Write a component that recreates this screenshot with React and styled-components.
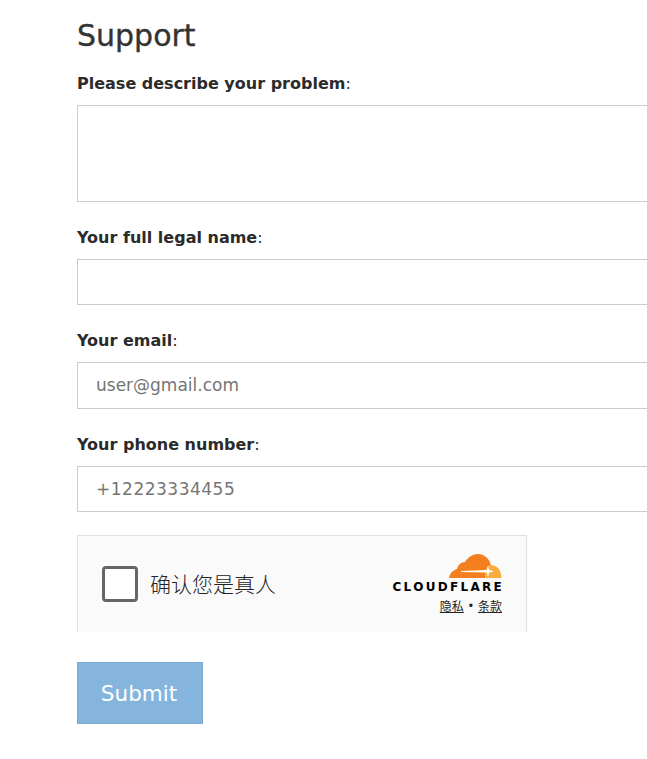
import React from 'react';
import styled, { createGlobalStyle } from 'styled-components';

const GlobalStyle = createGlobalStyle`
  html, body {
    margin: 0;
    height: 100%;
    overflow: hidden;
    background: #fff;
  }
  body {
    font-family: "DejaVu Sans", "Noto Sans", sans-serif;
    color: #2b2b2b;
  }
`;

const Page = styled.div`
  box-sizing: border-box;
  width: 100%;
  overflow: hidden;
  padding: 0 0 0 77px;
`;

const Title = styled.h1`
  margin: 0;
  padding-top: 17px;
  font-size: 30px;
  line-height: 38px;
  font-weight: 400;
  color: #333;
  -webkit-text-stroke: 0.35px #333;
`;

const Form = styled.form`
  display: flex;
  flex-direction: column;
  padding-top: 16px;
`;

const Field = styled.div`
  display: flex;
  flex-direction: column;
  margin-bottom: 23px;
`;

const Label = styled.label`
  display: block;
  padding-top: 1px;
  font-size: 16px;
  line-height: 24px;
  font-weight: 700;
  color: #2b2b2b;
  margin-bottom: 9px;
`;

const Colon = styled.span`
  font-weight: 400;
`;

const Input = styled.input`
  box-sizing: border-box;
  width: 640px;
  height: ${p => p.$height || 46}px;
  padding: 0 18px ${p => (p.$height ? 2 : 0)}px;
  border: 1px solid #ccc;
  border-radius: 0;
  outline: none;
  font-family: inherit;
  font-size: 17px;
  letter-spacing: ${p => p.$spacing || 0}px;
  color: #333;
  background: #fff;
  &::placeholder {
    color: #757575;
    opacity: 1;
  }
`;

const TextArea = styled.textarea`
  display: block;
  box-sizing: border-box;
  width: 640px;
  height: 97px;
  border: 1px solid #ccc;
  outline: none;
  resize: none;
  background: #fff;
`;

const Widget = styled.div`
  box-sizing: border-box;
  display: flex;
  align-items: flex-start;
  justify-content: space-between;
  width: 450px;
  height: 97px;
  padding: 18px 24px 0 24px;
  background: #fafafa;
  border: 1px solid #e0e0e0;
  border-bottom: none;
`;

const Check = styled.div`
  display: flex;
  align-items: center;
  gap: 12px;
  padding-top: 12px;
`;

const Box = styled.span`
  box-sizing: border-box;
  display: block;
  width: 36px;
  height: 36px;
  border: 3px solid #666;
  border-radius: 4px;
  background: #fff;
`;

const CheckText = styled.span`
  padding-bottom: 2px;
  font-family: "Noto Sans CJK SC", sans-serif;
  font-size: 21px;
  line-height: 30px;
  font-weight: 300;
  color: #232323;
`;

const Brand = styled.div`
  display: flex;
  flex-direction: column;
  align-items: flex-end;
`;

const Cloud = styled.svg`
  display: block;
  width: 53px;
  height: 25px;
`;

const Wordmark = styled.span`
  display: block;
  margin-top: 1px;
  font-family: "DejaVu Sans", sans-serif;
  font-size: 12px;
  line-height: 15px;
  font-weight: 700;
  letter-spacing: 2.3px;
  margin-right: -2px;
  color: #000;
`;

const Links = styled.div`
  display: flex;
  align-items: center;
  gap: 5px;
  margin-top: 3px;
  font-family: "Noto Sans CJK SC", sans-serif;
  font-size: 12px;
  line-height: 16px;
  color: #232323;
`;

const FooterLink = styled.a`
  color: inherit;
  text-decoration: underline;
`;

const Dot = styled.span`
  font-family: "Liberation Sans", sans-serif;
`;

const Submit = styled.button`
  box-sizing: border-box;
  align-self: flex-start;
  width: 126px;
  height: 62px;
  margin-top: 30px;
  padding: 0 2px 0 0;
  border: 1px solid #7ba9d2;
  border-radius: 0;
  background: #85b4dd;
  color: #fff;
  font-family: inherit;
  font-size: 21.5px;
`;

const CloudflareCloud = () => (
  <Cloud viewBox="0 0 53 25" aria-hidden="true">
    <path
      fill="#f38020"
      d="M0 24C1 19 4 16 8 15 9 11 12 8 16 8 19 3 24 0 29 0 35 0 40 4 42 11 39 11 37 14 36 24Z"
    />
    <path fill="#faad3f" d="M42 11C48 11 52 16 52.500 24H36C36.500 16 38 11 42 11Z" />
    <path
      fill="#fff"
      d="M39 12 40.200 16 45 17.200 40.200 18.400 39 23 37.800 18.400 12 18.100V17L37.800 16Z"
    />
  </Cloud>
);

export default function App() {
  return (
    <Page>
      <GlobalStyle />
      <Title>Support</Title>
      <Form>
        <Field>
          <Label>Please describe your problem<Colon>:</Colon></Label>
          <TextArea />
        </Field>
        <Field>
          <Label>Your full legal name<Colon>:</Colon></Label>
          <Input />
        </Field>
        <Field>
          <Label>Your email<Colon>:</Colon></Label>
          <Input $height={47} placeholder="user@gmail.com" />
        </Field>
        <Field>
          <Label>Your phone number<Colon>:</Colon></Label>
          <Input $spacing={0.5} placeholder="+12223334455" />
        </Field>
        <Widget>
          <Check>
            <Box />
            <CheckText>确认您是真人</CheckText>
          </Check>
          <Brand>
            <CloudflareCloud />
            <Wordmark>CLOUDFLARE</Wordmark>
            <Links>
              <FooterLink>隐私</FooterLink>
              <Dot>•</Dot>
              <FooterLink>条款</FooterLink>
            </Links>
          </Brand>
        </Widget>
        <Submit type="button">Submit</Submit>
      </Form>
    </Page>
  );
}
